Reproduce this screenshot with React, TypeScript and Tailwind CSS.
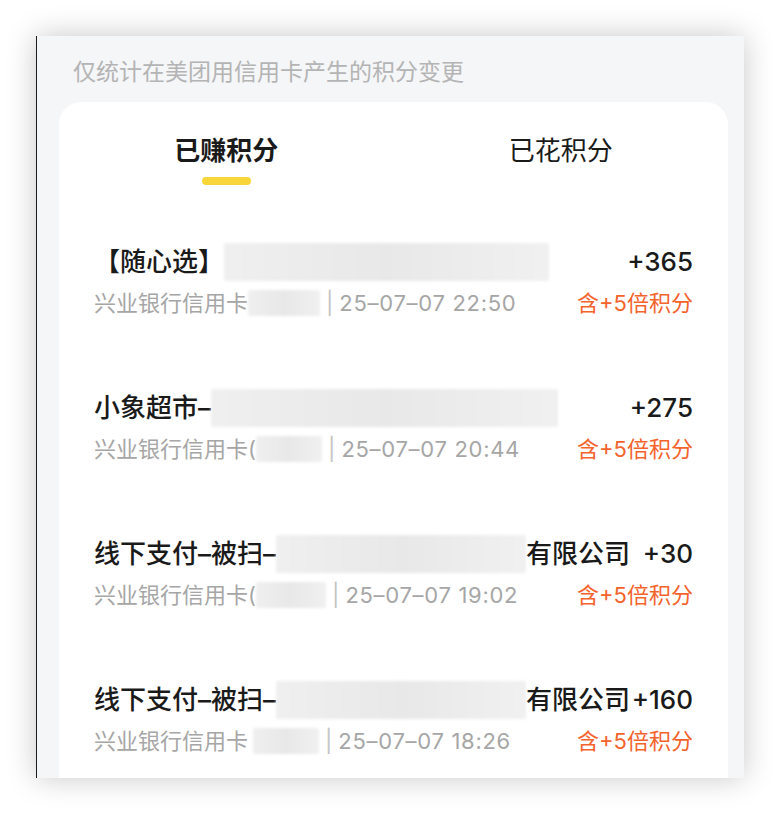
const font = { fontFamily: '"Inter", "Noto Sans CJK SC", sans-serif' }

type Row = {
  lead: string
  titleBlur: number
  tail?: string
  points: string
  cardGap?: string
  cardOffset?: number
  cardBlur: number
  time: string
}

const rows: Row[] = [
  { lead: "【随心选】", titleBlur: 325, points: "+365", cardBlur: 72, time: "25–07–07 22:50" },
  { lead: "小象超市–", titleBlur: 347, points: "+275", cardGap: "(", cardBlur: 66, time: "25–07–07 20:44" },
  { lead: "线下支付–被扫–", titleBlur: 250, tail: "有限公司", points: "+30", cardGap: "(", cardBlur: 70, time: "25–07–07 19:02" },
  { lead: "线下支付–被扫–", titleBlur: 250, tail: "有限公司", points: "+160", cardOffset: 5, cardBlur: 66, time: "25–07–07 18:26" },
]

function Blur({ w, h, ml = 0 }: { w: number; h: number; ml?: number }) {
  return (
    <div
      className="shrink-0 rounded-[2px] bg-gradient-to-r from-[#efefef] via-[#e8e8e8] to-[#f0f0f0] blur-[1.5px]"
      style={{ width: w, height: h, marginLeft: ml }}
    />
  )
}

function PointRow({ row }: { row: Row }) {
  return (
    <div className="flex flex-col gap-[8px] py-[36px]">
      <div className="flex h-[36px] items-center">
        <span className="whitespace-nowrap text-[26px] font-medium leading-[36px] text-[#1a1a1a]">{row.lead}</span>
        <Blur w={row.titleBlur} h={38} />
        {row.tail && (
          <span className="whitespace-nowrap text-[26px] font-medium leading-[36px] text-[#1a1a1a]">{row.tail}</span>
        )}
        <span className="ml-auto whitespace-nowrap text-[26px] font-medium leading-[36px] text-[#1a1a1a]">
          {row.points}
        </span>
      </div>
      <div className="flex h-[30px] items-center text-[22px] leading-[30px] text-[#a6a6a6]">
        <span className="whitespace-nowrap">兴业银行信用卡{row.cardGap}</span>
        <Blur w={row.cardBlur} h={26} ml={row.cardOffset} />
        <span className="mx-[6px] text-[#c4c4c4]">|</span>
        <span className="whitespace-nowrap tracking-[0.7px]">{row.time}</span>
        <span className="ml-auto whitespace-nowrap text-[#f4632c]">含+5倍积分</span>
      </div>
    </div>
  )
}

export default function App() {
  return (
    <div className="h-[814px] w-[780px] bg-white pl-[36px] pt-[36px]" style={font}>
      <div className="flex h-[742px] w-[708px] flex-col overflow-hidden border-l-[1.5px] border-[#1c1c1c] bg-[#f5f6f8] shadow-[0_0_28px_rgba(0,0,0,0.22)]">
        <div className="flex h-[66px] shrink-0 items-center pl-[36px] pt-[6px] text-[23px] text-[#b4b4b4]">
          仅统计在美团用信用卡产生的积分变更
        </div>
        <div className="ml-[22px] mr-[16px] shrink-0 rounded-t-[22px] bg-white">
          <div className="flex pt-[31px]">
            <div className="flex flex-1 flex-col items-center">
              <span className="text-[26px] font-semibold leading-[36px] text-[#1a1a1a]">已赚积分</span>
              <div className="mt-[8px] h-[8px] w-[49px] rounded-full bg-[#f8d63a]" />
            </div>
            <div className="flex flex-1 flex-col items-center">
              <span className="text-[26px] leading-[36px] text-[#1a1a1a]">已花积分</span>
            </div>
          </div>
          <div className="mt-[23px] flex flex-col px-[35px]">
            {rows.map((r, i) => (
              <PointRow key={i} row={r} />
            ))}
          </div>
        </div>
      </div>
    </div>
  )
}
